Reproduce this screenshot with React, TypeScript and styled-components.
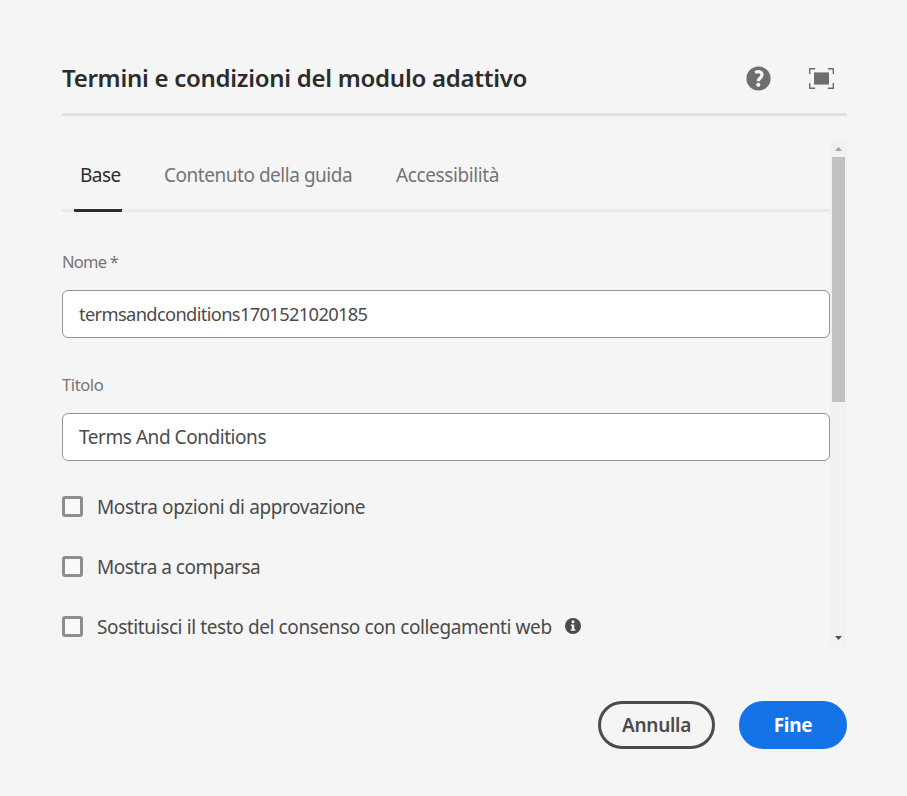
import React from "react";
import styled, { createGlobalStyle } from "styled-components";

const GlobalStyle = createGlobalStyle`
  *, *::before, *::after { box-sizing: border-box; }
  body {
    margin: 0;
    background: #f5f5f5;
    font-family: "Noto Sans", "Open Sans", sans-serif;
    color: #4b4b4b;
  }
`;

const Dialog = styled.main`
  display: flex;
  flex-direction: column;
  height: 796px;
  padding: 41px 60px 47px 62px;
`;

const Header = styled.header`
  display: flex;
  align-items: center;
  height: 75px;
  border-bottom: 3px solid #e1e1e1;
`;

const Title = styled.h1`
  flex: 1;
  margin: 0;
  padding-top: 2px;
  font-size: 24px;
  font-weight: 600;
  line-height: 32px;
  letter-spacing: -0.27px;
  color: #2c2c2c;
  white-space: nowrap;
`;

const HeaderActions = styled.div`
  display: flex;
  align-items: center;
  gap: 38px;
  padding: 2px 13px 0 0;
  color: #6e6e6e;

  svg { display: block; }
`;

const ScrollArea = styled.div`
  display: flex;
  height: 507px;
  margin-top: 24px;
`;

const Form = styled.section`
  flex: 1;
`;

const TabList = styled.nav`
  display: flex;
  height: 72px;
  padding-left: 12px;
  border-bottom: 3px solid #eaeaea;
`;

const Tab = styled.div<{ $active?: boolean; $width: number; $tracking: number }>`
  width: ${(p) => p.$width}px;
  height: 72px;
  padding-left: 6px;
  font-size: 19px;
  line-height: 70px;
  letter-spacing: ${(p) => p.$tracking}px;
  white-space: nowrap;
  color: ${(p) => (p.$active ? "#2c2c2c" : "#747474")};
  border-bottom: 3px solid ${(p) => (p.$active ? "#2c2c2c" : "transparent")};
  border-radius: 1px;
`;

const TabGap = styled.div<{ $width: number }>`
  width: ${(p) => p.$width}px;
`;

const Field = styled.div`
  height: 123px;
  padding-top: 38px;
`;

const Label = styled.div<{ $tracking: number }>`
  height: 24px;
  margin-bottom: 16px;
  font-size: 16.5px;
  line-height: 24px;
  letter-spacing: ${(p) => p.$tracking}px;
  color: #747474;
`;

const TextBox = styled.div<{ $size?: number; $tracking: number }>`
  height: 48px;
  padding-left: 16px;
  border: 1px solid #959595;
  border-radius: 6px;
  background: #fff;
  font-size: ${(p) => p.$size ?? 19}px;
  line-height: 46px;
  letter-spacing: ${(p) => p.$tracking}px;
`;

const Options = styled.div`
  display: grid;
  grid-auto-rows: 60px;
  height: 180px;
  margin-top: 18px;
`;

const Option = styled.div`
  display: flex;
  align-items: center;
`;

const Checkbox = styled.span`
  width: 21px;
  height: 21px;
  margin-right: 14px;
  border: 3px solid #8e8e8e;
  border-radius: 3px;
  background: #fafafa;
`;

const OptionText = styled.span<{ $tracking: number }>`
  padding-top: 2px;
  font-size: 19px;
  line-height: 26px;
  letter-spacing: ${(p) => p.$tracking}px;
  white-space: nowrap;
`;

const InfoSlot = styled.span`
  display: flex;
  margin-left: 13.5px;
`;

const Scrollbar = styled.div`
  display: flex;
  flex-direction: column;
  align-items: center;
  width: 17px;
  background: #f1f1f1;
`;

const ScrollButton = styled.div`
  display: flex;
  align-items: center;
  justify-content: center;
  height: 17px;

  &:last-child { padding-bottom: 2px; }
`;

const Thumb = styled.div`
  width: 13px;
  height: 245px;
  margin-bottom: auto;
  background: #c1c1c1;
`;

const Footer = styled.footer`
  display: flex;
  justify-content: flex-end;
  gap: 24px;
  margin-top: auto;
`;

const Button = styled.button<{ $primary?: boolean }>`
  width: ${(p) => (p.$primary ? 108 : 117)}px;
  height: 48px;
  padding: 0;
  border: 3px solid ${(p) => (p.$primary ? "#1473e6" : "#4b4b4b")};
  border-radius: 24px;
  background: ${(p) => (p.$primary ? "#1473e6" : "transparent")};
  color: ${(p) => (p.$primary ? "#fff" : "#4b4b4b")};
  font: ${(p) => (p.$primary ? 700 : 600)} 19px/42px "Noto Sans", sans-serif;
  letter-spacing: ${(p) => (p.$primary ? -0.3 : -0.3)}px;
`;

const HelpIcon = () => (
  <svg width="25" height="25" viewBox="0 0 25 25">
    <circle cx="12.5" cy="12.5" r="12.1" fill="currentColor" />
    <path d="M9.1 6.6c3.6-1.9 6.9-.7 6.9 2.1 0 3.2-3.8 3.3-3.8 6.6" fill="none" stroke="#f5f5f5" strokeWidth="3.2" />
    <circle cx="12.3" cy="18.8" r="2.1" fill="#f5f5f5" />
  </svg>
);

const FullscreenIcon = () => (
  <svg width="25" height="21" viewBox="0 0 25 21">
    <path d="M.7 6V.7h5.5M18.8.7h5.5V6M24.3 15v5.3h-5.5M6.2 20.3H.7V15" fill="none" stroke="currentColor" strokeWidth="1.4" />
    <path d="M5 4.4h15v12.2H5z" fill="currentColor" />
  </svg>
);

const InfoIcon = () => (
  <svg width="16" height="16" viewBox="0 0 16 16">
    <circle cx="8" cy="8" r="8" fill="currentColor" />
    <circle cx="8" cy="3.8" r="1.5" fill="#f5f5f5" />
    <path d="M5.8 6.4h3.5v4.9h1.1v1.5H5.8v-1.5h1V7.9h-1z" fill="#f5f5f5" />
  </svg>
);

export default function App() {
  return (
    <>
      <GlobalStyle />
      <Dialog>
        <Header>
          <Title>Termini e condizioni del modulo adattivo</Title>
          <HeaderActions>
            <HelpIcon />
            <FullscreenIcon />
          </HeaderActions>
        </Header>
        <ScrollArea>
          <Form>
            <TabList>
              <Tab $active $width={48} $tracking={-0.5}>Base</Tab>
              <TabGap $width={36} />
              <Tab $width={196} $tracking={-0.47}>Contenuto della guida</Tab>
              <TabGap $width={36} />
              <Tab $width={110} $tracking={-0.4}>Accessibilità</Tab>
            </TabList>
            <Field>
              <Label $tracking={-0.75}>Nome *</Label>
              <TextBox $size={18.3} $tracking={-0.65}>termsandconditions1701521020185</TextBox>
            </Field>
            <Field>
              <Label $tracking={-0.4}>Titolo</Label>
              <TextBox $tracking={-0.45}>Terms And Conditions</TextBox>
            </Field>
            <Options>
              <Option>
                <Checkbox />
                <OptionText $tracking={-0.39}>Mostra opzioni di approvazione</OptionText>
              </Option>
              <Option>
                <Checkbox />
                <OptionText $tracking={-0.5}>Mostra a comparsa</OptionText>
              </Option>
              <Option>
                <Checkbox />
                <OptionText $tracking={-0.39}>Sostituisci il testo del consenso con collegamenti web</OptionText>
                <InfoSlot><InfoIcon /></InfoSlot>
              </Option>
            </Options>
          </Form>
          <Scrollbar>
            <ScrollButton>
              <svg width="7" height="4" viewBox="0 0 7 4"><path d="M3.5 0 7 4H0z" fill="#a3a3a3" /></svg>
            </ScrollButton>
            <Thumb />
            <ScrollButton>
              <svg width="7" height="4" viewBox="0 0 7 4"><path d="M0 0h7L3.5 4z" fill="#505050" /></svg>
            </ScrollButton>
          </Scrollbar>
        </ScrollArea>
        <Footer>
          <Button>Annulla</Button>
          <Button $primary>Fine</Button>
        </Footer>
      </Dialog>
    </>
  );
}
